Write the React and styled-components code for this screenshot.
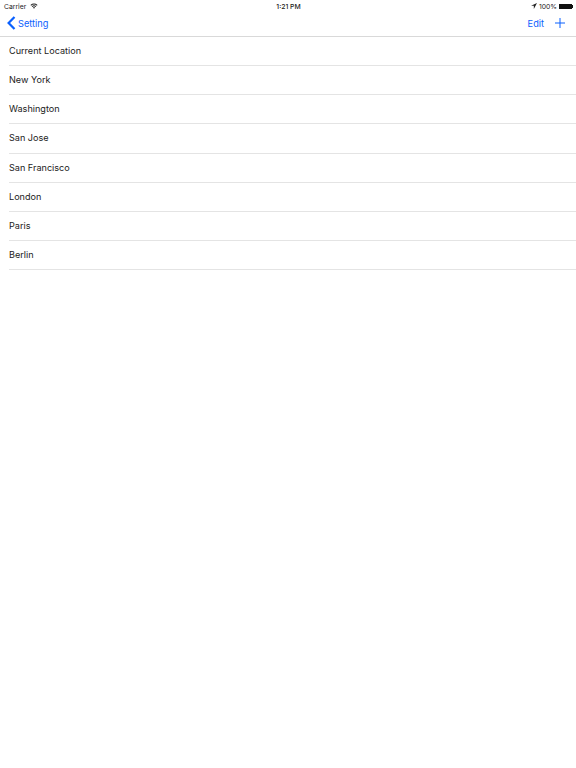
import React from 'react'
import styled, { createGlobalStyle } from 'styled-components'

const cities = ['Current Location', 'New York', 'Washington', 'San Jose', 'San Francisco', 'London', 'Paris', 'Berlin']

const App = () => {
    return (
        <Page>
            <Global />
            <StatusBar>
                <StatusLeft>
                    <span>Carrier</span>
                    <svg width="8" height="6" viewBox="0 0 10 8">
                        <path d="M0.3 2.7a6.6 6.6 0 0 1 9.4 0L8.8 3.6a5.3 5.3 0 0 0-7.6 0z" fill="#222" />
                        <path d="M2 4.4a4.2 4.2 0 0 1 6 0L7.1 5.3a2.9 2.9 0 0 0-4.2 0z" fill="#222" />
                        <path d="M3.6 6a1.9 1.9 0 0 1 2.8 0L5 7.5z" fill="#222" />
                    </svg>
                </StatusLeft>
                <StatusTime>1:21 PM</StatusTime>
                <StatusRight>
                    <svg width="6" height="6" viewBox="0 0 7 7">
                        <path d="M7 0L0 3.2h3.3V7z" fill="#222" />
                    </svg>
                    <span>100%</span>
                    <Battery>
                        <BatteryTip />
                    </Battery>
                </StatusRight>
            </StatusBar>
            <NavBar>
                <BackLink>
                    <svg width="9" height="14" viewBox="0 0 9 14">
                        <path d="M7.5 1L1.6 7l5.9 6" fill="none" stroke="#0a60fe" strokeWidth="2.2" />
                    </svg>
                    <span>Setting</span>
                </BackLink>
                <NavActions>
                    <span>Edit</span>
                    <svg width="10" height="10" viewBox="0 0 10 10">
                        <path d="M5 0v10M0 5h10" fill="none" stroke="#0a60fe" strokeWidth="1" />
                    </svg>
                </NavActions>
            </NavBar>
            <List>
                {cities.map((city) => (
                    <Row key={city}>{city}</Row>
                ))}
            </List>
        </Page>
    )
}

export default App

const Global = createGlobalStyle`
html, body {
    margin:0;
    background:#fff;
}
`
const Page = styled.div`
width:576px;
height:768px;
background:#fff;
font-family:Inter, Roboto, sans-serif;
overflow:hidden;
`
const StatusBar = styled.div`
height:12px;
display:grid;
grid-template-columns:1fr auto 1fr;
align-items:center;
padding:0 3px 0 4px;
font-size:6.8px;
color:#222;
`
const StatusLeft = styled.div`
display:flex;
align-items:center;
gap:4px;
`
const StatusTime = styled.div`
font-weight:500;
`
const StatusRight = styled.div`
display:flex;
align-items:center;
justify-content:flex-end;
gap:2px;
`
const Battery = styled.div`
position:relative;
width:13px;
height:5px;
background:#111;
margin-right:1px;
`
const BatteryTip = styled.div`
position:absolute;
right:-1px;
top:1px;
width:1px;
height:3px;
background:#111;
`
const NavBar = styled.div`
box-sizing:border-box;
height:25px;
display:flex;
align-items:center;
justify-content:space-between;
padding:0 11px 2px 7px;
border-bottom:1px solid #d9d9d9;
color:#0a60fe;
font-size:9.2px;
`
const BackLink = styled.div`
display:flex;
align-items:center;
gap:2px;
`
const NavActions = styled.div`
display:flex;
align-items:center;
gap:11px;
`
const List = styled.div`
padding-left:9px;
`
const Row = styled.div`
box-sizing:border-box;
height:29.17px;
line-height:28px;
border-bottom:1px solid #e4e4e4;
font-size:9.1px;
color:#222;
`
